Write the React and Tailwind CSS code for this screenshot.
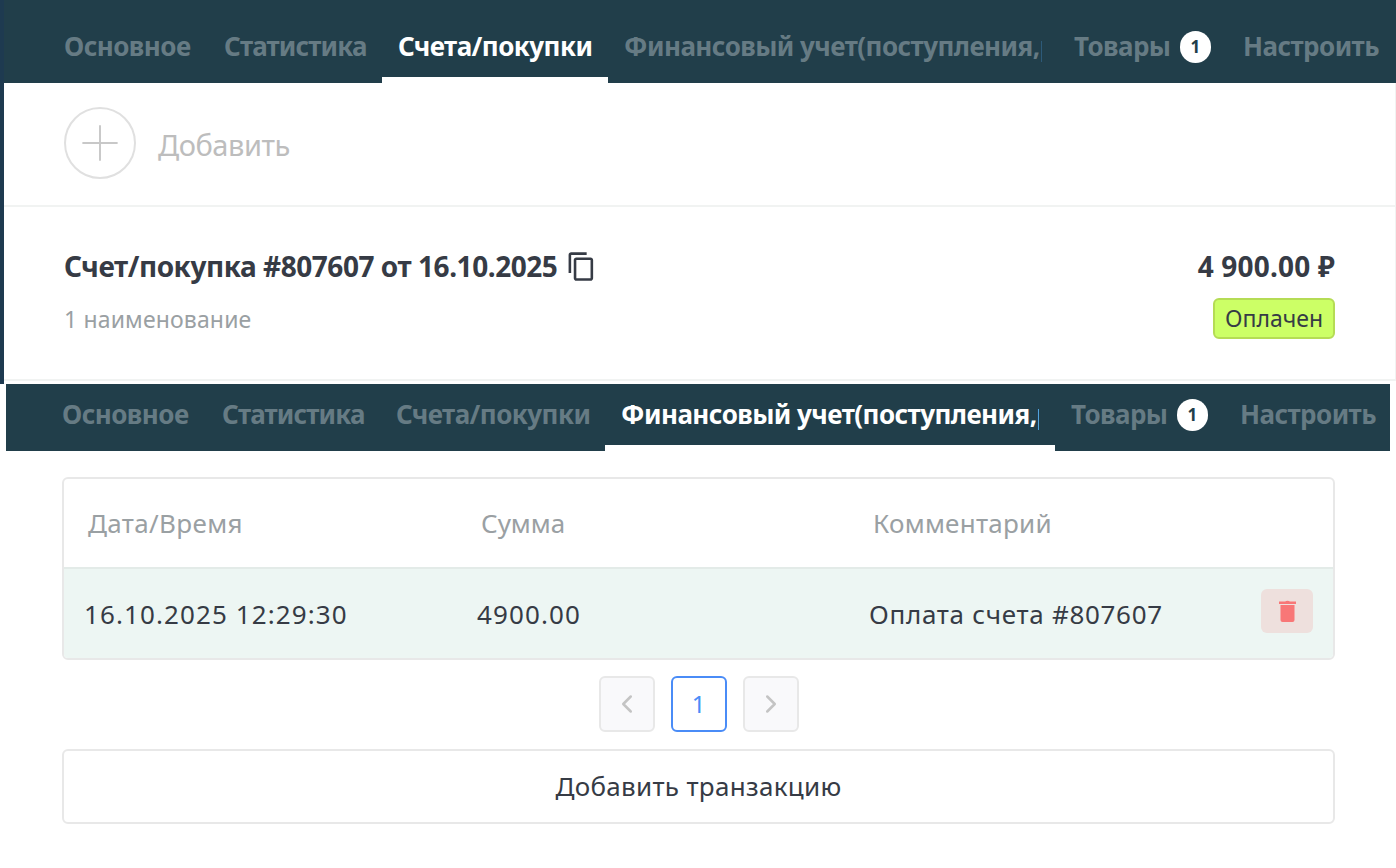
import { ChevronLeft, ChevronRight, Plus } from 'lucide-react';

const FINANCE = 'Финансовый учет(поступления,расходы)';

const Tabs = ({ active, className, tabPad }) => {
  const items = [
    { name: 'Основное', width: 'w-[160px]' },
    { name: 'Статистика', width: 'w-[174px]', text: 'block tracking-[-0.85px]' },
    { name: 'Счета/покупки', width: active === FINANCE ? 'w-[225px]' : 'w-[226px]' },
    // only the long tab gets clipped
    { name: FINANCE, width: 'w-[450px]', text: 'block overflow-hidden w-full' },
  ];
  return (
    <div className={`flex bg-[#213e4a] font-['Noto_Sans'] font-bold text-[26px] tracking-[-0.55px] ${className}`}>
      {items.map((item) => (
        <div
          key={item.name}
          className={`flex items-center px-4 border-b-[6px] whitespace-nowrap shrink-0 ${tabPad} ${item.width} ${
            item.name === active ? 'text-white border-white' : 'text-[#667b84] border-transparent'
          }`}
        >
          <span className={item.text || 'block'}>{item.name}</span>
        </div>
      ))}
      <div className={`flex items-center px-4 border-b-[6px] border-transparent text-[#667b84] w-[169px] shrink-0 ${tabPad}`}>
        <span>Товары</span>
        <span className="ml-[9px] flex items-center justify-center w-8 h-8 rounded-full bg-white text-[#213e4a] text-[17px] tracking-normal">
          1
        </span>
      </div>
      <div className={`flex items-center px-4 border-b-[6px] border-transparent text-[#667b84] whitespace-nowrap ${tabPad}`}>
        Настроить
      </div>
    </div>
  );
};

const PageButton = ({ children, current }) => (
  <div
    className={`flex items-center justify-center w-14 h-14 rounded-md border-2 text-[24px] ${
      current ? 'border-[#4a8cf7] text-[#4a8cf7] bg-white' : 'border-[#e8e8e8] bg-[#f9f9fb] text-[#c4c4c4]'
    }`}
  >
    {children}
  </div>
);

export default function App() {
  return (
    <div className="w-[1396px] h-[868px] bg-white overflow-hidden font-['Noto_Sans',sans-serif] text-[#363b45]">
      {/* Invoices panel */}
      <section className="h-[384px] border-l-4 border-[#1e3a50]">
        <Tabs active="Счета/покупки" className="h-[83px] pl-[44px]" tabPad="pt-[16px]" />
        <div className="h-[124px] flex items-center pl-[60px] pb-[2px] border-b-2 border-r border-[#f1f3f2]">
          <div className="w-[72px] h-[72px] rounded-full border-2 border-[#e0e0e0] flex items-center justify-center text-[#c8c8c8]">
            <Plus size={58} strokeWidth={0.8} />
          </div>
          <span className="ml-[22px] mt-[4px] text-[29px] text-[#bdbdbd] tracking-[-0.45px]">Добавить</span>
        </div>
        <div className="h-[174px] flex justify-between pl-[60px] pr-[60px] border-b-2 border-r border-[#f1f3f2]">
          <div className="pt-[39px]">
            <div className="flex items-center h-10">
              <span className="text-[28px] font-bold tracking-[-0.45px] whitespace-nowrap">
                Счет/покупка #807607 от 16.10.2025
              </span>
              <svg width="31" height="31" viewBox="0 0 24 24" fill="currentColor" className="ml-[9px]">
                <path d="M16 1H4c-1.1 0-2 .9-2 2v14h2V3h12V1zm3 4H8c-1.1 0-2 .9-2 2v14c0 1.1.9 2 2 2h11c1.1 0 2-.9 2-2V7c0-1.1-.9-2-2-2zm0 16H8V7h11v14z" />
              </svg>
            </div>
            <div className="mt-[16px] text-[23px] text-[#9aa0a3] tracking-[0.15px]">1 наименование</div>
          </div>
          <div className="flex flex-col items-end pt-[39px]">
            <div className="h-10 flex items-center text-[28px] font-bold tracking-[0.2px]">4 900.00 ₽</div>
            <div className="mt-[12px] h-[41px] w-[122px] flex items-center justify-center rounded-md border-2 border-[#b5dc55] bg-[#ccff66] text-[23px]">
              Оплачен
            </div>
          </div>
        </div>
      </section>

      {/* Finance panel */}
      <section className="mx-[6px]">
        <Tabs active={FINANCE} className="h-[67px] pl-[40px]" tabPad="pt-0" />
        <div className="pl-[56px] pr-[55px] pt-[26px]">
          <div className="border-2 border-[#e8e8e8] rounded-md overflow-hidden text-[26px]">
            <div className="h-[90px] flex items-center border-b-2 border-[#e3ebe8] text-[#9aa0a3] pl-[24px]">
              <div className="w-[393px] tracking-[0.35px]">Дата/Время</div>
              <div className="w-[392px]">Сумма</div>
              <div className="tracking-[0.25px]">Комментарий</div>
            </div>
            <div className="h-[89px] flex items-center bg-[#edf6f3] pl-[20px] pr-[20px] pt-[2px]">
              <div className="w-[393px] tracking-[1.1px]">16.10.2025 12:29:30</div>
              <div className="w-[392px] tracking-[1.1px]">4900.00</div>
              <div className="tracking-[0.7px]">Оплата счета #807607</div>
              <button className="ml-auto mb-[8px] w-[52px] h-[44px] rounded-md bg-[#eee0dd] flex items-center justify-center">
                <svg width="17" height="22" viewBox="0 0 17 22" fill="#f87777">
                  <path d="M6 1.6 Q8.5 0 11 1.6 H17 V4 H0 V1.6 Z" />
                  <path d="M1.5 5 H15.5 V20 Q15.5 22 13.5 22 H3.5 Q1.5 22 1.5 20 Z" />
                </svg>
              </button>
            </div>
          </div>
          <div className="flex justify-center gap-4 mt-[16px]">
            <PageButton><ChevronLeft size={30} strokeWidth={2} /></PageButton>
            <PageButton current>1</PageButton>
            <PageButton><ChevronRight size={30} strokeWidth={2} /></PageButton>
          </div>
          <button className="mt-[17px] w-full h-[75px] rounded-md border-2 border-[#e8e8e8] text-[26px] tracking-[0.3px] bg-white">
            Добавить транзакцию
          </button>
        </div>
      </section>
    </div>
  );
}
